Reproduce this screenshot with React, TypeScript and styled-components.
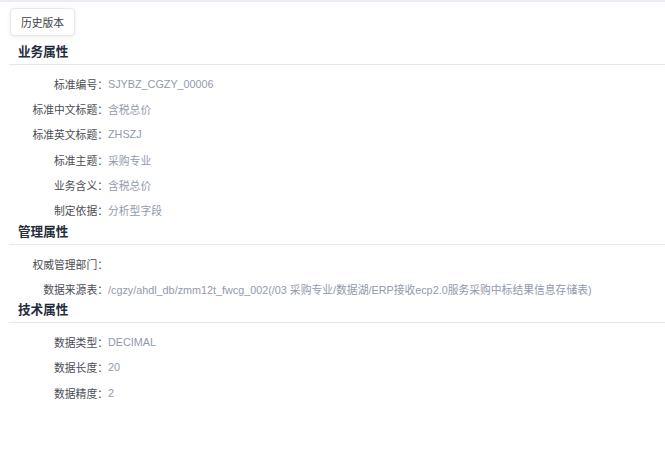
import React from "react";
import styled, { createGlobalStyle } from "styled-components";

const Global = createGlobalStyle`
  html, body { margin: 0; padding: 0; background: #fff; }
  body { font-family: "Liberation Sans", "Noto Sans CJK SC", Arial, sans-serif; }
`;

const Page = styled.div`
  border-top: 2px solid #e9ecf2;
  padding: 6px 0 0 9px;
  box-sizing: border-box;
  width: 665px;
`;

const Button = styled.button`
  margin-left: 1px;
  height: 28px;
  width: 65px;
  padding: 0;
  background: #fff;
  border: 1px solid #e6e8ed;
  border-radius: 4px;
  box-shadow: 0 1px 4px rgba(0, 0, 0, 0.08);
  font-family: "Liberation Sans", "Noto Sans CJK SC", sans-serif;
  font-size: 10.8px;
  color: #3a3d44;
  cursor: pointer;
`;

const SectionTitle = styled.div<{ $first?: boolean }>`
  margin-top: ${(p) => (p.$first ? "7px" : "0")};
  padding-left: 9px;
  height: 21px;
  line-height: 18px;
  border-bottom: 1px solid #e3e8f0;
  font-size: 12.6px;
  font-weight: bold;
  color: #1f2d3d;
`;

const Rows = styled.div`
  padding: 6.4px 0 0;
`;

const Row = styled.div`
  display: flex;
  align-items: center;
  height: 25.2px;
  font-size: 10.8px;
  white-space: nowrap;
`;

const Label = styled.span`
  width: 99px;
  flex: none;
  text-align: right;
  color: #4a4d55;
`;

const Value = styled.span`
  color: #9299ad;
`;

type Item = [string, string];

const sections: { title: string; items: Item[] }[] = [
  {
    title: "业务属性",
    items: [
      ["标准编号：", "SJYBZ_CGZY_00006"],
      ["标准中文标题：", "含税总价"],
      ["标准英文标题：", "ZHSZJ"],
      ["标准主题：", "采购专业"],
      ["业务含义：", "含税总价"],
      ["制定依据：", "分析型字段"],
    ],
  },
  {
    title: "管理属性",
    items: [
      ["权威管理部门：", ""],
      [
        "数据来源表：",
        "/cgzy/ahdl_db/zmm12t_fwcg_002(/03 采购专业/数据湖/ERP接收ecp2.0服务采购中标结果信息存储表)",
      ],
    ],
  },
  {
    title: "技术属性",
    items: [
      ["数据类型：", "DECIMAL"],
      ["数据长度：", "20"],
      ["数据精度：", "2"],
    ],
  },
];

export default function App() {
  return (
    <>
      <Global />
      <Page>
        <Button>历史版本</Button>
        {sections.map((s, i) => (
          <React.Fragment key={s.title}>
            <SectionTitle $first={i === 0}>{s.title}</SectionTitle>
            <Rows>
              {s.items.map(([l, v]) => (
                <Row key={l}>
                  <Label>{l}</Label>
                  <Value>{v}</Value>
                </Row>
              ))}
            </Rows>
          </React.Fragment>
        ))}
      </Page>
    </>
  );
}
